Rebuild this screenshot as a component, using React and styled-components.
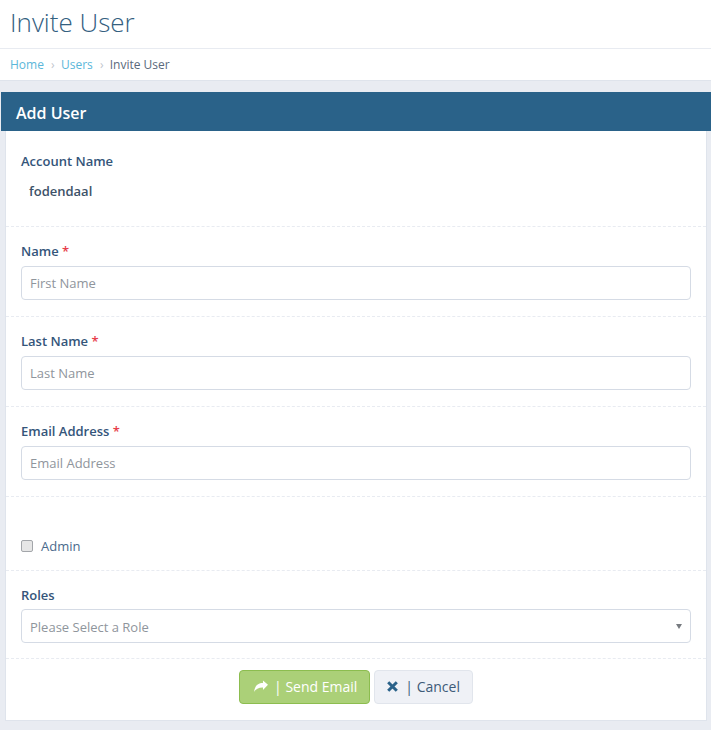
import React from "react";
import styled, { createGlobalStyle } from "styled-components";

const GlobalStyle = createGlobalStyle`
  html, body {
    margin: 0;
    padding: 0;
    background: #e9ecf2;
  }
  * {
    box-sizing: border-box;
  }
  body {
    font-family: "Open Sans", "Liberation Sans", sans-serif;
    font-size: 13px;
    color: #34495e;
    overflow: hidden;
  }
`;

const Page = styled.div`
  width: 711px;
  height: 730px;
  display: flex;
  flex-direction: column;
`;

const TitleBar = styled.header`
  height: 49px;
  background: #ffffff;
  border-bottom: 1px solid #e8ebf1;
  padding-left: 10px;
`;

const Title = styled.h1`
  margin: 0;
  font-size: 26px;
  font-weight: 300;
  line-height: 45px;
  color: #34607f;
`;

const Breadcrumb = styled.nav`
  height: 32px;
  background: #ffffff;
  border-bottom: 1px solid #dfe4ec;
  padding-left: 10px;
  display: flex;
  align-items: center;
  font-size: 12px;
`;

const Crumb = styled.span`
  color: ${(p) => (p.$active ? "#5a6a7c" : "#5bb7da")};
`;

const Sep = styled.span`
  color: #c0c5cc;
  font-size: 12px;
  width: 17px;
  padding-left: 1px;
  text-align: center;
`;

const Panel = styled.section`
  margin: 11px 0 0 1px;
  display: flex;
  flex-direction: column;
`;

const PanelHeader = styled.div`
  height: 39px;
  background: #2a6289;
  color: #ffffff;
  font-size: 16px;
  font-weight: 600;
  line-height: 42px;
  padding-left: 15px;
`;

const PanelBody = styled.div`
  margin: 0 4px 0 4px;
  height: 590px;
  background: #ffffff;
  border-left: 1px solid #dfe4ec;
  border-right: 1px solid #dfe4ec;
  border-bottom: 1px solid #dfe4ec;
  display: flex;
  flex-direction: column;
`;

const Group = styled.div`
  height: ${(p) => p.$h}px;
  padding: ${(p) => p.$top}px 15px 0;
  border-bottom: 1px dashed #e8ebf1;
`;

const Label = styled.label`
  display: block;
  font-size: 13px;
  font-weight: 600;
  line-height: 18px;
  color: #34557a;
  margin-bottom: ${(p) => p.$gap ?? 6}px;
`;

const Required = styled.span`
  color: #e73d4a;
`;

const StaticValue = styled.div`
  font-size: 13px;
  font-weight: 600;
  line-height: 18px;
  color: #3d5268;
  padding: 6px 8px 0;
`;

const Input = styled.input`
  display: block;
  width: 100%;
  height: 34px;
  padding: 0 8px;
  border: 1px solid #d5dbe5;
  border-radius: 4px;
  background: #ffffff;
  font-family: inherit;
  font-size: 13px;
  outline: none;
  &::placeholder {
    color: #8f959c;
    opacity: 1;
  }
`;

const SelectBox = styled.div`
  height: 34px;
  padding: 1px 8px 0;
  border: 1px solid #d5dbe5;
  border-radius: 4px;
  display: flex;
  align-items: center;
  justify-content: space-between;
  color: #8f959c;
  font-size: 13px;
`;

const Caret = styled.span`
  width: 0;
  height: 0;
  margin-bottom: 1px;
  border-left: 3px solid transparent;
  border-right: 3px solid transparent;
  border-top: 5px solid #777b80;
`;

const CheckRow = styled.label`
  display: flex;
  align-items: center;
  gap: 8px;
  font-size: 13px;
  line-height: 18px;
  color: #4a6a8c;
`;

const CheckBox = styled.span`
  width: 12px;
  height: 12px;
  border: 1px solid #a3a6aa;
  border-radius: 2px;
  background: #e6e6e6;
`;

const Footer = styled.div`
  flex: 1;
  display: flex;
  justify-content: center;
  gap: 4px;
  padding-top: 11px;
`;

const Button = styled.button`
  height: 34px;
  padding: 0 12px 2px ${(p) => (p.$primary ? "14px" : "12px")};
  display: flex;
  align-items: center;
  gap: ${(p) => (p.$primary ? "6px" : "7px")};
  border: 1px solid ${(p) => (p.$primary ? "#8cbd4f" : "#e1e5ec")};
  border-radius: 4px;
  background: ${(p) => (p.$primary ? "#abd078" : "#eff1f6")};
  color: ${(p) => (p.$primary ? "#ffffff" : "#3d5b78")};
  font-family: inherit;
  font-size: 14px;
`;

const ShareIcon = () => (
  <svg width="14" height="13" viewBox="0 0 15 13" fill="#ffffff">
    <path d="M15 4.6 9.6 0v2.7C4.2 2.7 1 5.5 0 12.4c1.9-3.4 5-5 9.6-4.9v2.7z" />
  </svg>
);

const CloseIcon = () => (
  <svg width="11" height="11" viewBox="0 0 11 11" fill="none" stroke="#2a6289" strokeWidth="3">
    <path d="M1.2 1.2l8.6 8.6M9.8 1.2l-8.6 8.6" />
  </svg>
);

function App() {
  return (
    <Page>
      <GlobalStyle />
      <TitleBar>
        <Title>Invite User</Title>
      </TitleBar>
      <Breadcrumb>
        <Crumb>Home</Crumb>
        <Sep>›</Sep>
        <Crumb>Users</Crumb>
        <Sep>›</Sep>
        <Crumb $active>Invite User</Crumb>
      </Breadcrumb>
      <Panel>
        <PanelHeader>Add User</PanelHeader>
        <PanelBody>
          <Group $h={96} $top={21}>
            <Label>Account Name</Label>
            <StaticValue>fodendaal</StaticValue>
          </Group>
          <Group $h={90} $top={15}>
            <Label>
              Name <Required>*</Required>
            </Label>
            <Input placeholder="First Name" />
          </Group>
          <Group $h={90} $top={15}>
            <Label>
              Last Name <Required>*</Required>
            </Label>
            <Input placeholder="Last Name" />
          </Group>
          <Group $h={90} $top={15}>
            <Label>
              Email Address <Required>*</Required>
            </Label>
            <Input placeholder="Email Address" />
          </Group>
          <Group $h={74} $top={40}>
            <CheckRow>
              <CheckBox />
              Admin
            </CheckRow>
          </Group>
          <Group $h={88} $top={15}>
            <Label $gap={5}>Roles</Label>
            <SelectBox>
              Please Select a Role
              <Caret />
            </SelectBox>
          </Group>
          <Footer>
            <Button $primary>
              <ShareIcon />| Send Email
            </Button>
            <Button>
              <CloseIcon />| Cancel
            </Button>
          </Footer>
        </PanelBody>
      </Panel>
    </Page>
  );
}

export default App;
